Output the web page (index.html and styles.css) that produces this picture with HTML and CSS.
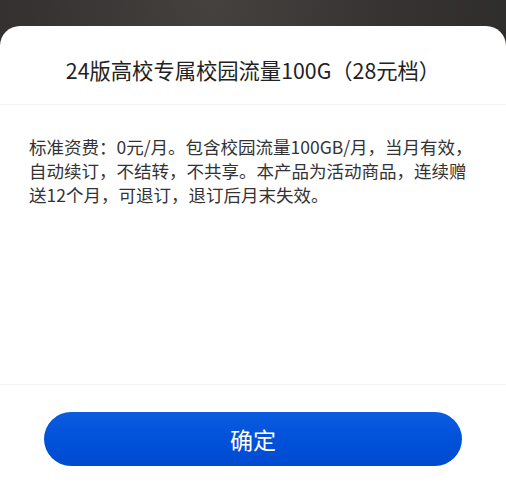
FILE: index.html
```html
<html>
  <head>
    <title>校园流量</title>
    <meta name="viewport" content="width=device-width, initial-scale=1">
    <link rel="stylesheet" href="styles.css">
  </head>
  <body>
    <div class="sheet">
      <div class="sheet-head">24版高校专属校园流量100G（28元档）</div>
      <div class="sheet-body">标准资费：0元/月。包含校园流量100GB/月，当月有效，自动续订，不结转，不共享。本产品为活动商品，连续赠送12个月，可退订，退订后月末失效。</div>
      <div class="sheet-foot">
        <button class="btn-ok">确定</button>
      </div>
    </div>
  </body>
</html>
```

FILE: styles.css
```css
html, body { height: 100%; }
body {
  margin: 0;
  font-family: "Noto Sans CJK SC", "Noto Sans", sans-serif;
  background: radial-gradient(ellipse at 42% 0%, #45413f 0%, #353231 45%, #2a2928 100%);
  overflow: hidden;
}
.sheet {
  margin-top: 26px;
  height: calc(100% - 26px);
  background: #fff;
  border-radius: 20px 20px 0 0;
  display: flex;
  flex-direction: column;
}
.sheet-head {
  padding: 30px 0 20px;
  font-size: 21.3px;
  line-height: 28px;
  color: #222;
  text-align: center;
  border-bottom: 1px solid #f3f3f3;
}
.sheet-body {
  flex: 1;
  padding: 30px 29px 0;
  font-size: 17.5px;
  line-height: 24px;
  color: #333;
}
.sheet-foot {
  border-top: 1px solid #f3f3f3;
  padding: 27px 44px 0;
  height: 88px;
}
.btn-ok {
  display: block;
  width: 100%;
  height: 54px;
  border: 0;
  border-radius: 27px;
  background: linear-gradient(180deg, #0a5ce0 0%, #0050d8 60%, #004bd0 100%);
  color: #fff;
  font-family: "Noto Sans CJK SC", sans-serif;
  font-size: 23px;
  cursor: pointer;
}
```
